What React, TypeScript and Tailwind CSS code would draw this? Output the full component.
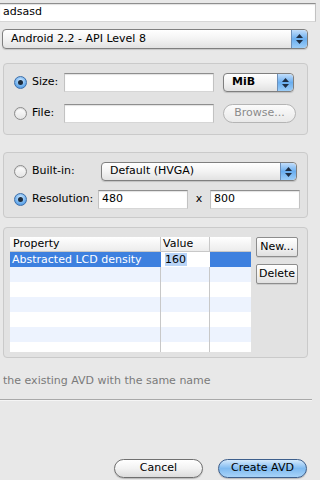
const font = "font-['DejaVu_Sans',sans-serif]";

function Radio({ on }: { on?: boolean }) {
  return on ? (
    <span className="flex h-[13px] w-[13px] shrink-0 items-center justify-center rounded-full border border-[#3e6fa9] bg-[radial-gradient(circle_at_50%_35%,#d6ecff,#6fb0ee_60%,#3c86d8)]">
      <span className="h-[5px] w-[5px] rounded-full bg-[#1d2c3d]" />
    </span>
  ) : (
    <span className="h-[13px] w-[13px] shrink-0 rounded-full border border-[#8c8c8c] bg-gradient-to-b from-[#ffffff] to-[#e4e4e4] shadow-[inset_0_1px_1px_rgba(0,0,0,0.15)]" />
  );
}

function Stepper() {
  return (
    <span className="flex h-full w-[16px] flex-col items-center justify-center gap-[2px] rounded-r-[4px] border-l border-[#6d8fb8] bg-gradient-to-b from-[#c2defb] via-[#6aaeef] to-[#9ccdf7]">
      <svg width="7" height="4" viewBox="0 0 7 4">
        <path d="M3.5 0 L7 4 L0 4 Z" fill="#1f2f44" />
      </svg>
      <svg width="7" height="4" viewBox="0 0 7 4">
        <path d="M0 0 L7 0 L3.5 4 Z" fill="#1f2f44" />
      </svg>
    </span>
  );
}

function Popup({ label, className }: { label: string; className: string }) {
  return (
    <div
      className={`flex items-center overflow-hidden rounded-[4px] border border-[#7f7f7f] bg-gradient-to-b from-[#ffffff] via-[#f3f3f3] to-[#e2e2e2] shadow-[0_1px_1px_rgba(0,0,0,0.15)] ${className}`}
    >
      <span className="flex-1 truncate pl-[8px] text-[11px] text-black">{label}</span>
      <Stepper />
    </div>
  );
}

function Field({ value, className }: { value?: string; className: string }) {
  return (
    <div
      className={`flex items-center border border-t-[#8e8e8e] border-x-[#c2c2c2] border-b-[#d6d6d6] bg-white pl-[3px] text-[11px] text-black shadow-[inset_0_1px_1px_rgba(0,0,0,0.12)] ${className}`}
    >
      {value}
    </div>
  );
}

function Group({ className, children }: { className: string; children: React.ReactNode }) {
  return (
    <div className={`ml-[3px] w-[305px] rounded-[4px] border border-[#cacaca] bg-[#e2e2e2] ${className}`}>
      {children}
    </div>
  );
}

function Bevel({ label }: { label: string }) {
  return (
    <div className="flex h-[20px] w-[42px] items-center justify-center rounded-[2px] border border-[#8d8d8d] bg-gradient-to-b from-[#ffffff] via-[#f2f2f2] to-[#e0e0e0] text-[11px] text-black shadow-[0_1px_0_rgba(0,0,0,0.1)]">
      {label}
    </div>
  );
}

const rows = [0, 1, 2, 3, 4, 5];

export default function App() {
  return (
    <div className={`relative flex h-[480px] w-[320px] flex-col overflow-hidden bg-[#e8e8e8] ${font}`}>
      <Field value="adsasd" className="mt-[3px] h-[19px] w-[316px] border-l-0" />

      <Popup label="Android 2.2 - API Level 8" className="ml-[2px] mt-[7px] h-[20px] w-[306px]" />

      <Group className="mt-[14px] flex h-[72px] flex-col gap-[12px] pl-[10px] pt-[9px]">
        <div className="flex items-center">
          <div className="flex w-[50px] items-center gap-[5px]">
            <Radio on />
            <span className="text-[11px] text-black">Size:</span>
          </div>
          <Field className="h-[19px] w-[150px]" />
          <Popup label="MiB" className="ml-[9px] h-[19px] w-[71px] font-bold" />
        </div>
        <div className="flex items-center">
          <div className="flex w-[50px] items-center gap-[5px]">
            <Radio />
            <span className="text-[11px] text-black">File:</span>
          </div>
          <Field className="h-[19px] w-[150px]" />
          <div className="ml-[9px] flex h-[19px] w-[73px] items-center justify-center rounded-full border border-[#b4b4b4] bg-gradient-to-b from-[#fbfbfb] to-[#e9e9e9] text-[11px] text-[#8a8a8a]">
            Browse...
          </div>
        </div>
      </Group>

      <Group className="mt-[17px] flex h-[66px] flex-col gap-[9px] pl-[10px] pt-[9px]">
        <div className="flex items-center">
          <div className="flex w-[87px] items-center gap-[5px]">
            <Radio />
            <span className="text-[11px] text-black">Built-in:</span>
          </div>
          <Popup label="Default (HVGA)" className="h-[19px] w-[196px]" />
        </div>
        <div className="flex items-center">
          <div className="flex w-[84px] items-center gap-[5px]">
            <Radio on />
            <span className="text-[11px] text-black">Resolution:</span>
          </div>
          <Field value="480" className="h-[19px] w-[90px]" />
          <span className="w-[22px] text-center text-[11px] text-black">x</span>
          <Field value="800" className="h-[19px] w-[90px]" />
        </div>
      </Group>

      <Group className="mt-[9px] flex h-[131px] gap-[5px] pl-[6px] pt-[9px]">
        <div className="flex h-[115px] w-[241px] flex-col overflow-hidden bg-white text-[11px]">
          <div className="flex h-[15px] shrink-0 border-b border-[#c8c8c8] bg-gradient-to-b from-[#ffffff] to-[#ececec] leading-[14px] text-black">
            <span className="w-[151px] border-r border-[#c8c8c8] pl-[3px]">Property</span>
            <span className="w-[49px] border-r border-[#c8c8c8] pl-[2px]">Value</span>
            <span className="flex-1" />
          </div>
          <div className="flex h-[15px] shrink-0 bg-[#3d80df] leading-[15px] text-white">
            <span className="w-[151px] pl-[2px]">Abstracted LCD density</span>
            <span className="flex w-[49px] items-center bg-white pl-[4px]">
              <span className="bg-[#b9d4f7] pr-[1px] leading-[13px] text-black">160</span>
            </span>
            <span className="flex-1" />
          </div>
          {rows.map((r) => (
            <div key={r} className={`flex h-[15px] shrink-0 ${r % 2 === 0 ? "bg-[#edf3fe]" : "bg-white"}`}>
              <span className="w-[151px] border-r border-[#c8c8c8]" />
              <span className="w-[49px] border-r border-[#c8c8c8]" />
              <span className="flex-1" />
            </div>
          ))}
        </div>
        <div className="flex flex-col gap-[7px]">
          <Bevel label="New..." />
          <Bevel label="Delete" />
        </div>
      </Group>

      <p className="mt-[15px] pl-[3px] text-[11px] text-[#7a7a7a]">the existing AVD with the same name</p>

      <div className="mt-[9px] h-[2px] w-[312px] border-t border-[#a9a9a9] border-b border-b-[#f5f5f5]" />

      <div className="mb-[2px] mt-auto flex justify-end gap-[15px] pr-[13px]">
        <div className="flex h-[19px] w-[89px] items-center justify-center rounded-full border border-[#6f6f6f] bg-gradient-to-b from-[#ffffff] via-[#f2f2f2] to-[#dcdcdc] text-[11px] text-black shadow-[0_1px_1px_rgba(0,0,0,0.2)]">
          Cancel
        </div>
        <div className="flex h-[19px] w-[89px] items-center justify-center rounded-full border border-[#3d5f8c] bg-gradient-to-b from-[#d4e9fc] via-[#7fbaf0] to-[#a7d3f8] text-[11px] text-black shadow-[0_1px_1px_rgba(0,0,0,0.2)]">
          Create AVD
        </div>
      </div>
    </div>
  );
}
